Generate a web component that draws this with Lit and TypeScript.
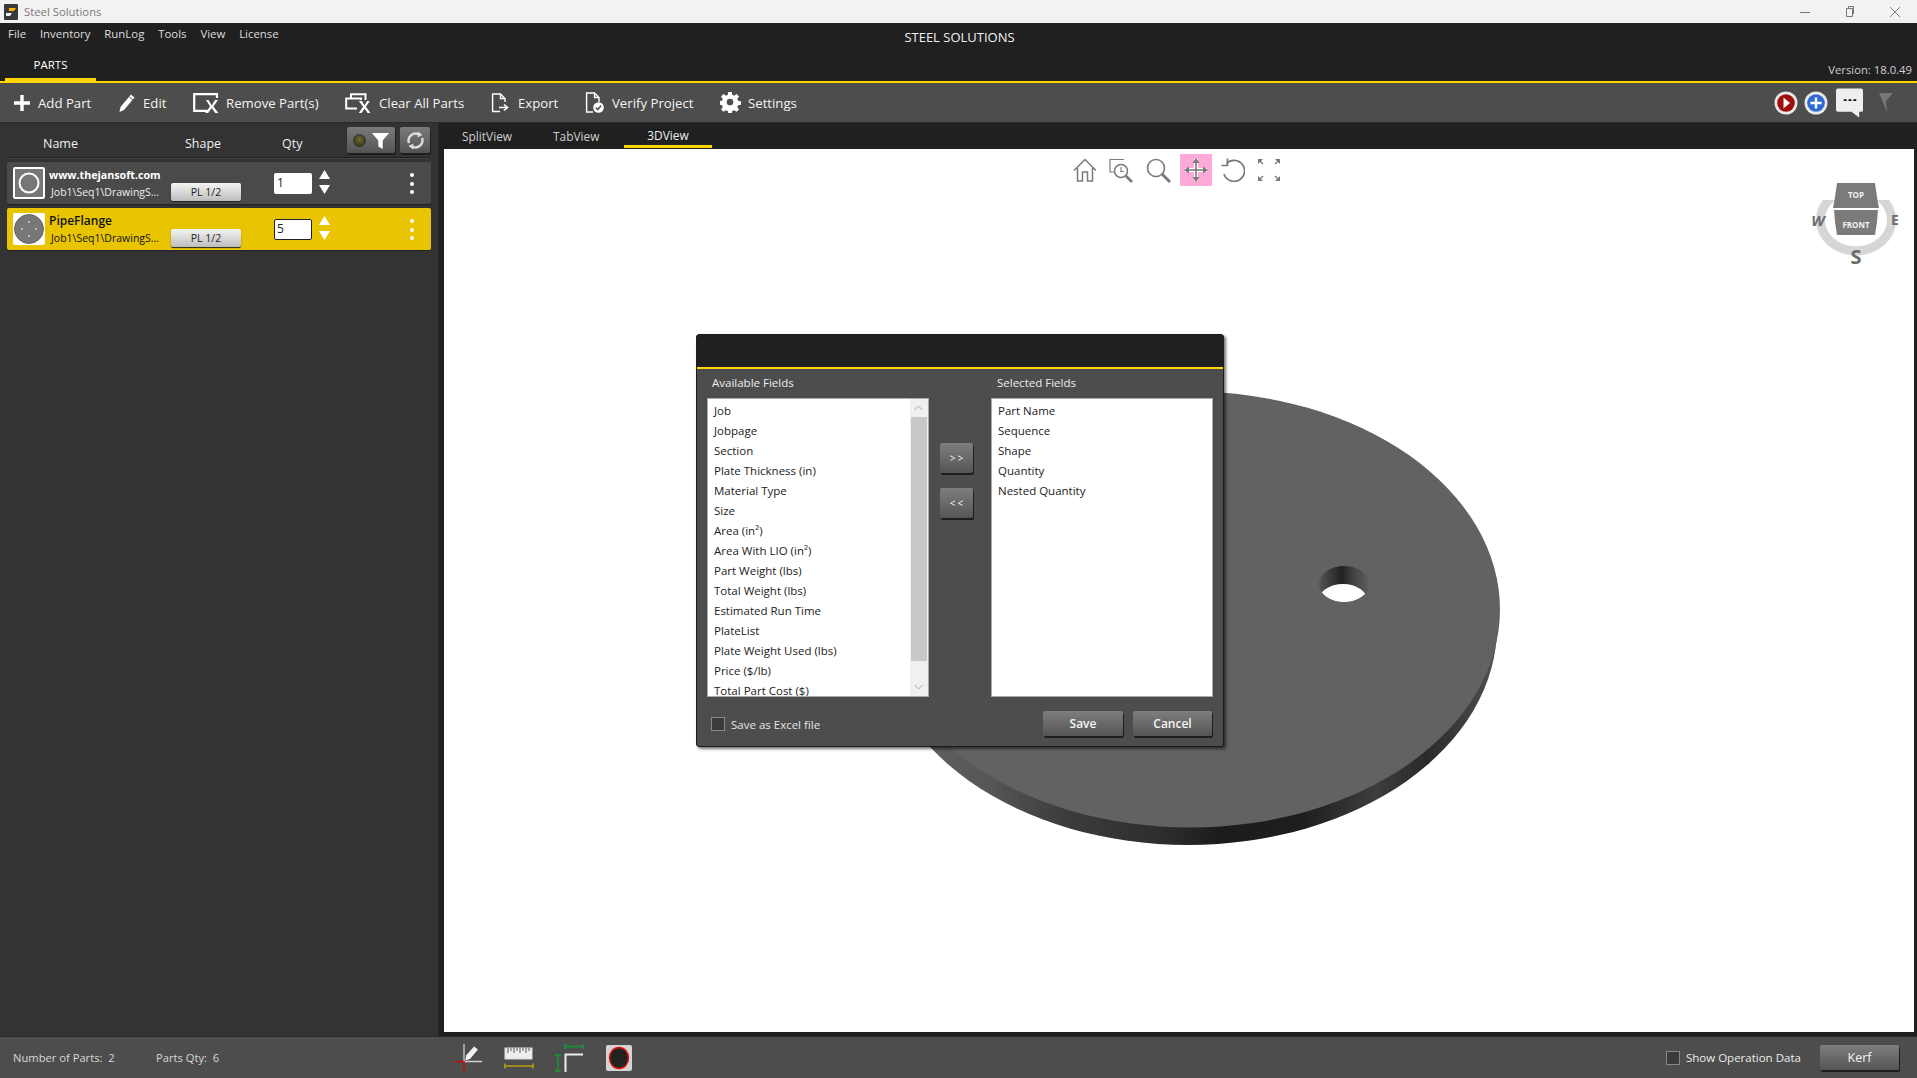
import { LitElement, html, css, svg } from "lit";
import { customElement } from "lit/decorators.js";

const available = ["Job","Jobpage","Section","Plate Thickness (in)","Material Type","Size","Area (in²)","Area With LIO (in²)","Part Weight (lbs)","Total Weight (lbs)","Estimated Run Time","PlateList","Plate Weight Used (lbs)","Price ($/lb)","Total Part Cost ($)"];
const selected = ["Part Name","Sequence","Shape","Quantity","Nested Quantity"];
const menus = ["File","Inventory","RunLog","Tools","View","License"];

const icons = {
  add: html`<svg width="18" height="18" viewBox="0 0 18 18"><path d="M9 1v16M1 9h16" stroke="#fff" stroke-width="3.4" fill="none"/></svg>`,
  edit: html`<svg width="18" height="20" viewBox="0 0 18 20"><path d="M13 1.5l3.5 3L6 17l-4.5 2 1-5z" fill="#fff"/><path d="M11.4 4l3.4 3" stroke="#4d4d4d" stroke-width="1"/></svg>`,
  remove: html`<svg width="26" height="20" viewBox="0 0 26 20"><path d="M14 17.800H1.200V1.200H24V5" stroke="#fff" stroke-width="2.200" fill="none"/><path d="M15.500 7l3.200 5.500L22 7h3l-4.600 6.500L25.400 20h-3.200l-3.500-5-3.500 5h-3.100l5-6.500L13 7z" fill="#fff"/></svg>`,
  clear: html`<svg width="27" height="20" viewBox="0 0 27 20"><path d="M6 5V1.200H20.500V7" stroke="#fff" stroke-width="2" fill="none"/><path d="M16 7V5.500H1.200V15.500H12" stroke="#fff" stroke-width="2" fill="none"/><path d="M17 8l2.500 4.500L22 8h2.800l-3.900 5.800L25.500 20h-2.900l-3-4.500-3 4.500h-2.800l4.300-6.200L13.800 8z" fill="#fff"/></svg>`,
  export: html`<svg width="20" height="20" viewBox="0 0 20 20"><path d="M9 18.500H1.600V1H9.500L14 5.500V9M9.500 1V5.500H14" stroke="#fff" stroke-width="1.400" fill="none"/><path d="M8 14.500h7.500M13 11.500l3.500 3-3.500 3" stroke="#fff" stroke-width="1.600" fill="none"/></svg>`,
  verify: html`<svg width="20" height="22" viewBox="0 0 20 22"><path d="M8 20H1.600V1H9.500L14 5.500V10M9.500 1V5.500H14" stroke="#fff" stroke-width="1.400" fill="none"/><circle cx="13.500" cy="15.500" r="5.300" fill="#fff"/><path d="M10.800 15.600l2 2 3.400-4" stroke="#4d4d4d" stroke-width="1.500" fill="none"/></svg>`,
  gear: html`<svg width="21" height="21" viewBox="0 0 21 21"><path fill="#fff" fill-rule="evenodd" d="M8.700 0h3.600l.5 3 2 .9L17.400 2.100l2.500 2.500-1.800 2.600.9 2 3 .5v3.600l-3 .5-.9 2 1.800 2.500-2.500 2.500-2.600-1.800-2 .9-.5 3H8.700l-.5-3-2-.9-2.600 1.800-2.500-2.500 1.800-2.500-.9-2-3-.5v-3.600l3-.5.9-2-1.800-2.600 2.500-2.500 2.600 1.800 2-.9zM10.500 7a3.500 3.500 0 1 0 0 7 3.500 3.500 0 0 0 0-7z" transform="scale(.955)"/></svg>`,
};

const navIcons = html`
  <svg class="nav" width="24" height="24" viewBox="0 0 24 24"><path d="M1 12.500L12 1.500l11 11M4.500 10v13H9.500V14h5v9h5V10" stroke="#7a7a7a" stroke-width="1.500" fill="none"/></svg>
  <svg class="nav" width="25" height="25" viewBox="0 0 25 25"><path d="M15 1.500H1V14h4" stroke="#7a7a7a" stroke-width="1.200" fill="none"/><circle cx="12" cy="13" r="6.500" stroke="#7a7a7a" stroke-width="1.500" fill="#fff"/><path d="M12 9v4.500h3" stroke="#7a7a7a" stroke-width="1.100" fill="none"/><path d="M17 18l6 6" stroke="#7a7a7a" stroke-width="2.600"/></svg>
  <svg class="nav" width="25" height="25" viewBox="0 0 25 25"><circle cx="10" cy="10" r="8.500" stroke="#7a7a7a" stroke-width="1.600" fill="none"/><path d="M16 16l8 8" stroke="#7a7a7a" stroke-width="3"/></svg>
  <div class="pan"><svg width="26" height="26" viewBox="0 0 26 26"><path d="M13 2v22M2 13h22" stroke="#fff" stroke-width="4"/><path d="M13 3v20M3 13h20" stroke="#7a7a7a" stroke-width="1.600"/><path d="M13 1l-3.500 5h7zM13 25l-3.500-5h7zM1 13l5-3.500v7zM25 13l-5-3.500v7z" fill="#7a7a7a"/></svg></div>
  <svg class="nav" width="24" height="24" viewBox="0 0 24 24"><path d="M5.500 5.500A10.500 10.500 0 1 1 3 16" stroke="#7a7a7a" stroke-width="1.700" fill="none"/><path d="M6.500 0.500v7h-6" stroke="#7a7a7a" stroke-width="1.700" fill="none"/></svg>
  <svg class="nav last" width="24" height="24" viewBox="0 0 24 24"><path d="M1 1h5L1 6zM23 1h-5l5 5zM1 23h5l-5-5zM23 23h-5l5-5z" fill="#7a7a7a"/><path d="M2 2l4 4M22 2l-4 4M2 22l4-4M22 22l-4-4" stroke="#7a7a7a" stroke-width="1.300"/></svg>`;

const compass = svg`
  <ellipse cx="1856" cy="220" rx="35.500" ry="31" fill="none" stroke="#d6d6d6" stroke-width="9"/>
  <rect x="1810" y="180" width="92" height="20" fill="#fff"/>
  <path d="M1837 183h38l2 14 2 11h-46l2-11z" fill="#7b7b7b"/>
  <path d="M1834 210h44l-1 12-2 13h-38l-2-13z" fill="#7b7b7b"/>
  <text x="1856" y="198" class="c-small">TOP</text>
  <text x="1856" y="228" class="c-small">FRONT</text>
  <text x="1818" y="226" class="c-w">W</text>
  <text x="1895" y="225" class="c-e">E</text>
  <text x="1856" y="264" class="c-s">S</text>`;

const disc = svg`
  <defs>
    <linearGradient id="side" gradientUnits="userSpaceOnUse" x1="880" x2="1500" y1="0" y2="0">
      <stop offset="0" stop-color="#666"/><stop offset=".18" stop-color="#555"/><stop offset=".3" stop-color="#3c3c3c"/>
      <stop offset=".45" stop-color="#2e2e2e"/><stop offset=".55" stop-color="#1c1c1c"/><stop offset=".68" stop-color="#1e1e1e"/>
      <stop offset=".8" stop-color="#3d3d3d"/><stop offset=".88" stop-color="#2a2a2a"/><stop offset=".96" stop-color="#444"/><stop offset="1" stop-color="#555"/>
    </linearGradient>
    <linearGradient id="hole" gradientUnits="userSpaceOnUse" x1="1319" x2="1369" y1="0" y2="0">
      <stop offset="0" stop-color="#555"/><stop offset=".45" stop-color="#222"/><stop offset=".7" stop-color="#444"/><stop offset="1" stop-color="#5e5e5e"/>
    </linearGradient>
    <clipPath id="holeclip"><ellipse cx="1344" cy="584" rx="25" ry="18"/></clipPath>
  </defs>
  <ellipse cx="1188" cy="627" rx="309" ry="218" fill="url(#side)"/>
  <ellipse cx="1190" cy="609.500" rx="310" ry="218" fill="#616263"/>
  <ellipse cx="1344" cy="584" rx="25" ry="18" fill="url(#hole)"/>
  <ellipse cx="1343" cy="602" rx="25" ry="18" fill="#fff" clip-path="url(#holeclip)"/>`;

@customElement("app-root")
class AppRoot extends LitElement {
  static styles = css`
    :host { display: flex; flex-direction: column; width: 1917px; height: 1078px; overflow: hidden; background: #202020; font-family: "Open Sans", "Noto Sans", sans-serif; font-size: 11.5px; color: #e6e6e6; }
    * { box-sizing: border-box; }
    svg { display: block; flex: none; }
    .title { height: 23px; background: #f2f2f2; display: flex; align-items: center; padding-left: 4px; color: #7a7a7a; font-size: 11.300px; }
    .logo { margin-right: 6px; }
    .win { margin-left: auto; display: flex; align-items: center; gap: 35px; padding-right: 17px; }
    .head { height: 58px; background: #202020; display: grid; grid-template-columns: 1fr auto 1fr; grid-template-rows: 22px 36px; position: relative; }
    .menu { display: flex; gap: 13.900px; padding-left: 8px; align-items: center; height: 21px; color: #ddd; font-size: 11.400px; }
    .brand { font-size: 13px; color: #f2f2f2; align-self: end; grid-column: 2; position: relative; top: 1px; left: 1px; line-height: 18px; }
    .tabrow { grid-column: 1 / 4; grid-row: 2; display: flex; justify-content: space-between; align-items: flex-end; }
    .parts { width: 91px; margin-left: 5px; height: 21px; text-align: center; color: #fff; border-bottom: 3px solid #ffd500; line-height: 10px; font-size: 11.5px; }
    .version { color: #cfcfcf; padding-right: 5px; font-size: 11.300px; line-height: 15px; margin-bottom: 4px; }
    .yline { height: 2px; background: #ffd500; }
    .toolbar { height: 40px; background: #4d4d4d; display: flex; align-items: center; border-bottom: 1px solid #2a2a2a; font-size: 13.200px; color: #f4f4f4; padding-left: 13px; }
    .tools { display: grid; grid-template-columns: 105px 75px 152px 146px 94px 135px 90px; }
    .tool { display: flex; align-items: center; gap: 7px; }
    .topright { margin-left: auto; display: flex; align-items: center; padding-right: 23px; }
    .tr-plus { margin-left: 6px; }
    .tr-chat { margin-left: 8px; }
    .tr-flag { margin-left: 16px; }
    .main { flex: 1; min-height: 0; display: flex; }
    .side { width: 439px; background: #333; border-right: 1px solid #282828; padding-top: 4px; }
    .side-head { display: grid; grid-template-columns: 142px 97px 65px 48px 5px 30px; margin-left: 43px; align-items: center; height: 26px; font-size: 12.500px; color: #f0f0f0; }
    .side-head span { padding-top: 7px; }
    .hr { background: #202020; margin: 4px 9px 3px 8px; border-bottom: 1px solid #444; height: 2px; }
    .sbtn { height: 26px; border-radius: 2px; background: linear-gradient(#7a7a7a, #545454); box-shadow: 1px 2px 0 #1d1d1d; display: flex; align-items: center; justify-content: center; gap: 6px; }
    .sbtn.filter { grid-column: 4; }
    .sbtn.ref { grid-column: 6; }
    .led { width: 13px; height: 13px; border-radius: 50%; background: radial-gradient(circle at 50% 40%, #6e6a2f, #2a2a12); border: 1px solid #333; }
    .rows { display: flex; flex-direction: column; gap: 4px; padding-left: 7px; }
    .row { width: 424px; height: 42px; background: #4a4a4a; border-radius: 2px; display: flex; position: relative; padding-left: 6px; align-items: flex-start; box-shadow: 0 1px 1px #222; }
    .row.sel { background: #e8c500; color: #111; }
    .thumb { width: 32px; height: 32px; margin-top: 5px; flex: none; }
    .meta { width: 122px; margin-left: 4px; }
    .nm { font-weight: 700; font-size: 10.700px; line-height: 16px; margin-top: 5px; color: #fff; white-space: nowrap; }
    .row.sel .nm { color: #111; font-weight: 600; font-size: 12px; }
    .path { font-size: 10.500px; line-height: 14px; padding-left: 2px; margin-top: 2px; color: #eee; white-space: nowrap; }
    .row.sel .path { color: #111; }
    .pl { width: 70px; height: 18px; margin-top: 21px; border-radius: 2px; background: linear-gradient(#f4f4f4, #bdbdbd); box-shadow: 0 1px 1px #222; color: #222; text-align: center; line-height: 18px; font-size: 10.500px; }
    .qty { width: 38px; height: 21px; margin: 11px 0 0 33px; background: #fff; border-radius: 2px; color: #222; padding-left: 3px; line-height: 20px; font-size: 12px; }
    .row.sel .qty { border: 1px solid #222; line-height: 18px; padding-left: 2px; }
    .arrows { margin: 8px 0 0 7px; display: flex; flex-direction: column; gap: 6px; }
    .dots { position: absolute; left: 403px; top: 11px; display: flex; flex-direction: column; gap: 4.500px; }
    .dots i { width: 4px; height: 4px; background: #fff; border-radius: 50%; display: block; }
    .right { flex: 1; min-width: 0; display: flex; flex-direction: column; background: #202020; padding: 0 3px 4px 5px; }
    .tabs { height: 26px; display: flex; padding-left: 18px; font-size: 11.900px; color: #cfcfcf; }
    .tab { line-height: 26px; }
    .tab.a { width: 91px; }
    .tab.b { width: 71px; }
    .tab.c { width: 88px; text-align: center; color: #eee; border-bottom: 3px solid #ffd500; height: 25px; line-height: 25px; }
    .canvas { flex: 1; min-height: 0; background: #fff; position: relative; overflow: hidden; }
    .scene { position: absolute; left: 0; top: 0; width: 1470px; height: 883px; }
    .c-small { font: 700 8px "Open Sans", sans-serif; fill: #f2f2f2; text-anchor: middle; }
    .c-w { font: italic 700 15px "Open Sans", sans-serif; fill: #6c6c6c; text-anchor: middle; }
    .c-e { font: 700 14px "Open Sans", sans-serif; fill: #6c6c6c; text-anchor: middle; }
    .c-s { font: 700 20px "Open Sans", sans-serif; fill: #6c6c6c; text-anchor: middle; }
    .navbar { position: absolute; left: 629px; top: 5px; display: flex; align-items: center; height: 32px; }
    .nav { margin-right: 12px; }
    .nav.last { margin-right: 0; }
    .pan { width: 32px; height: 32px; background: #fdaad8; display: flex; align-items: center; justify-content: center; margin: 0 9px 0 -3px; }
    .dialog { position: absolute; left: 252px; top: 185px; width: 528px; height: 413px; background: #4d4d4d; border: 1px solid #1c1c1c; border-radius: 3px; box-shadow: 2px 2px 3px rgba(0,0,0,.55); display: flex; flex-direction: column; overflow: hidden; }
    .d-title { height: 34px; background: #202020; border-bottom: 2px solid #ffd500; flex: none; }
    .d-body { display: grid; grid-template-columns: 222px 11px 33px 18px 222px; padding: 0 0 0 10px; grid-template-rows: 29px 299px; }
    .d-label { line-height: 27px; padding-left: 5px; color: #ededed; font-size: 11.500px; }
    .d-label.sf { grid-column: 5; padding-left: 6px; }
    .list { background: #fff; border: 1px solid #aaa; color: #222; padding: 2px 0 0 6px; overflow: hidden; position: relative; font-size: 11.500px; }
    .list.av { grid-column: 1; grid-row: 2; }
    .list.se { grid-column: 5; grid-row: 2; }
    .it { line-height: 20px; height: 20px; white-space: nowrap; }
    .sb { position: absolute; right: 0; top: 0; bottom: 0; width: 18px; background: #f0f0f0; }
    .thumbbar { position: absolute; left: 1px; right: 1px; top: 18px; height: 244px; background: #c8c8c8; }
    .chev { position: absolute; left: 4px; }
    .chev.up { top: 6px; }
    .chev.dn { bottom: 6px; }
    .mid { grid-column: 3; grid-row: 2; display: flex; flex-direction: column; gap: 15px; padding-top: 45px; }
    .btn { background: linear-gradient(#7e7e7e, #555); border-radius: 2px; box-shadow: 1px 2px 0 #1d1d1d; display: flex; align-items: center; justify-content: center; color: #f4f4f4; }
    .arrow-btn { width: 33px; height: 30px; font-size: 10px; letter-spacing: 2px; padding-left: 2px; }
    .d-foot { flex: 1; display: flex; align-items: center; padding: 3px 11px 0 14px; }
    .d-opt { display: flex; align-items: center; margin-top: 2px; }
    .check { width: 14px; height: 14px; background: #3b3b3b; border: 1px solid #888; margin-right: 6px; flex: none; }
    .d-acts { margin-left: auto; display: flex; gap: 10px; }
    .act { width: 80px; height: 25px; font-weight: 600; font-size: 12px; }
    .act.c { width: 79px; }
    .status { height: 42px; background: #4d4d4d; display: flex; align-items: center; padding-left: 13px; color: #d8d8d8; border-top: 1px solid #2a2a2a; font-size: 11.200px; }
    .st1 { width: 143px; }
    .st2 { width: 298px; }
    .sicons { display: flex; align-items: center; gap: 22px; }
    .corner { margin-left: -2px; }
    .sright { margin-left: auto; display: flex; align-items: center; padding-right: 18px; }
    .optext { width: 134px; color: #ececec; font-size: 11.500px; }
    .kerf { width: 79px; height: 25px; font-size: 12.500px; }
  `;

  private row(name: string, qty: string, sel: boolean) {
    return html`<div class="row ${sel ? "sel" : ""}">
      <div class="thumb">${sel
        ? html`<svg width="32" height="32" viewBox="0 0 32 32"><rect width="32" height="32" rx="2" fill="#fff"/><circle cx="16" cy="16" r="14.500" fill="#777" stroke="#555" stroke-width=".8"/><g fill="#ccc"><circle cx="16" cy="9" r="1"/><circle cx="16" cy="23" r="1"/><circle cx="9" cy="16" r="1"/><circle cx="23" cy="16" r="1"/></g></svg>`
        : html`<svg width="32" height="32" viewBox="0 0 32 32"><rect x="1" y="1" width="30" height="30" rx="1" fill="#777" stroke="#fff" stroke-width="2"/><circle cx="16" cy="16" r="9.500" fill="none" stroke="#fff" stroke-width="2"/></svg>`}</div>
      <div class="meta"><div class="nm">${name}</div><div class="path">Job1\\Seq1\\DrawingS...</div></div>
      <div class="pl">PL 1/2</div>
      <div class="qty">${qty}</div>
      <div class="arrows">
        <svg width="11" height="9" viewBox="0 0 11 9"><path d="M5.500 0L11 9H0z" fill="#fff"/></svg>
        <svg width="11" height="9" viewBox="0 0 11 9"><path d="M0 0h11L5.500 9z" fill="#fff"/></svg>
      </div>
      <div class="dots"><i></i><i></i><i></i></div>
    </div>`;
  }

  render() {
    return html`
      <div class="title">
        <svg class="logo" width="14" height="16" viewBox="0 0 14 16"><rect width="14" height="16" rx="1" fill="#3a3a3a"/><path d="M5 4h7l-2 3H5z" fill="#ffb400"/><path d="M2 9h6l-2 3H2z" fill="#f5f5f5"/></svg>
        Steel Solutions
        <div class="win">
          <svg width="10" height="10" viewBox="0 0 10 10"><path d="M0 5.500h10" stroke="#777"/></svg>
          <svg width="10" height="11" viewBox="0 0 10 11"><path d="M1.500 2.500h6v8h-6zM3.500 2.500V.5h5v7h-1" fill="none" stroke="#777"/></svg>
          <svg width="10" height="10" viewBox="0 0 10 10"><path d="M0 0l10 10M10 0L0 10" stroke="#777" stroke-width=".9"/></svg>
        </div>
      </div>
      <div class="head">
        <div class="menu">${menus.map((m) => html`<span>${m}</span>`)}</div>
        <div class="brand">STEEL SOLUTIONS</div>
        <div class="tabrow"><div class="parts">PARTS</div><div class="version">Version: 18.0.49</div></div>
      </div>
      <div class="yline"></div>
      <div class="toolbar">
        <div class="tools">
          <div class="tool">${icons.add}<span>Add Part</span></div>
          <div class="tool">${icons.edit}<span>Edit</span></div>
          <div class="tool">${icons.remove}<span>Remove Part(s)</span></div>
          <div class="tool">${icons.clear}<span>Clear All Parts</span></div>
          <div class="tool">${icons.export}<span>Export</span></div>
          <div class="tool">${icons.verify}<span>Verify Project</span></div>
          <div class="tool">${icons.gear}<span>Settings</span></div>
        </div>
        <div class="topright">
          <svg width="24" height="24" viewBox="0 0 24 24"><circle cx="12" cy="12" r="11.500" fill="#e8e8e8"/><circle cx="12" cy="12" r="8.800" fill="#a00d0d"/><path d="M9.500 6.500l6.500 5.500-6.500 5.500z" fill="#fff"/></svg>
          <svg class="tr-plus" width="24" height="24" viewBox="0 0 24 24"><circle cx="12" cy="12" r="11.500" fill="#e8e8e8"/><circle cx="12" cy="12" r="8.800" fill="#2f6bd0"/><path d="M12 6.500v11M6.500 12h11" stroke="#fff" stroke-width="2.400"/></svg>
          <svg class="tr-chat" width="27" height="30" viewBox="0 0 28 30"><path d="M2 0h24a2 2 0 0 1 2 2v21l-1 1h-3v6l-8-6H2a2 2 0 0 1-2-2V2a2 2 0 0 1 2-2z" fill="#efefef"/><path d="M8 12h3M13 12h3M18 12h3" stroke="#111" stroke-width="2"/></svg>
          <svg class="tr-flag" width="15" height="19" viewBox="0 0 15 19"><path d="M0 0h14L7 8l1 11z" fill="#777"/></svg>
        </div>
      </div>
      <div class="main">
        <div class="side">
          <div class="side-head">
            <span>Name</span><span>Shape</span><span>Qty</span>
            <div class="sbtn filter"><div class="led"></div><svg width="17" height="17" viewBox="0 0 17 17"><path d="M0 1h17l-6.300 7.500V17l-4.400-2.500V8.500z" fill="#fff"/></svg></div>
            <div class="sbtn ref"><svg width="19" height="19" viewBox="0 0 19 19"><path d="M3 12A7 7 0 0 1 13 3.500" stroke="#ddd" stroke-width="2.400" fill="none"/><path d="M12 .5l4.500 3.500-5 2.500z" fill="#ddd"/><path d="M16 7A7 7 0 0 1 6 15.500" stroke="#ddd" stroke-width="2.400" fill="none"/><path d="M7 18.500L2.500 15l5-2.500z" fill="#ddd"/></svg></div>
          </div>
          <div class="hr"></div>
          <div class="rows">
            ${this.row("www.thejansoft.com", "1", false)}
            ${this.row("PipeFlange", "5", true)}
          </div>
        </div>
        <div class="right">
          <div class="tabs"><div class="tab a">SplitView</div><div class="tab b">TabView</div><div class="tab c">3DView</div></div>
          <div class="canvas">
            <svg class="scene" viewBox="444 149 1470 883">${disc}${compass}</svg>
            <div class="navbar">${navIcons}</div>
            <div class="dialog">
              <div class="d-title"></div>
              <div class="d-body">
                <div class="d-label">Available Fields</div>
                <div class="d-label sf">Selected Fields</div>
                <div class="list av">
                  ${available.map((a) => html`<div class="it">${a}</div>`)}
                  <div class="sb"><div class="thumbbar"></div>
                    <svg class="chev up" width="9" height="6" viewBox="0 0 9 6"><path d="M.5 5l4-4 4 4" stroke="#aaa" fill="none"/></svg>
                    <svg class="chev dn" width="9" height="6" viewBox="0 0 9 6"><path d="M.5 1l4 4 4-4" stroke="#aaa" fill="none"/></svg>
                  </div>
                </div>
                <div class="mid"><div class="btn arrow-btn">&gt;&gt;</div><div class="btn arrow-btn">&lt;&lt;</div></div>
                <div class="list se">${selected.map((a) => html`<div class="it">${a}</div>`)}</div>
              </div>
              <div class="d-foot">
                <div class="d-opt"><div class="check"></div><span>Save as Excel file</span></div>
                <div class="d-acts"><div class="btn act">Save</div><div class="btn act c">Cancel</div></div>
              </div>
            </div>
          </div>
        </div>
      </div>
      <div class="status">
        <div class="st1">Number of Parts:&nbsp; 2</div>
        <div class="st2">Parts Qty:&nbsp; 6</div>
        <div class="sicons">
          <svg width="28" height="28" viewBox="0 0 28 28"><path d="M10 0v18M10 17.500h18" stroke="#cfcfcf" stroke-width="1.300"/><path d="M0 17.500h10M10 17v10.500" stroke="#c01010" stroke-width="1.600"/><path d="M20 2.500l4 3-8 9.500-4.500 1.500 .5-5z" fill="#f2f2f2"/></svg>
          <svg width="30" height="22" viewBox="0 0 30 22"><rect x="1" y="1" width="27" height="11" fill="#eee" stroke="#ddd"/><path d="M4 1v5M7 1v3M10 1v5M13 1v3M16 1v5M19 1v3M22 1v5M25 1v3" stroke="#555"/><path d="M1 19h28M1 16.500v5M29 16.500v5" stroke="#b8a010" stroke-width="1.600"/></svg>
          <svg class="corner" width="30" height="30" viewBox="0 0 30 30"><path d="M11 3.500h18M11 1v5M29 1v5" stroke="#1f8a3a" stroke-width="1.800"/><path d="M1 12h6M4 12v16M1 28h6" stroke="#1f8a3a" stroke-width="1.800"/><path d="M29 11.500H11.500V29" stroke="#eee" stroke-width="2" fill="none"/></svg>
          <svg width="26" height="26" viewBox="0 0 26 26"><rect width="26" height="26" rx="2" fill="#d4d4d4"/><ellipse cx="13" cy="13" rx="9.500" ry="10.500" fill="#222" stroke="#e01010" stroke-width="1.500"/></svg>
        </div>
        <div class="sright">
          <div class="check"></div><div class="optext">Show Operation Data</div>
          <div class="btn kerf">Kerf</div>
        </div>
      </div>
    `;
  }
}
